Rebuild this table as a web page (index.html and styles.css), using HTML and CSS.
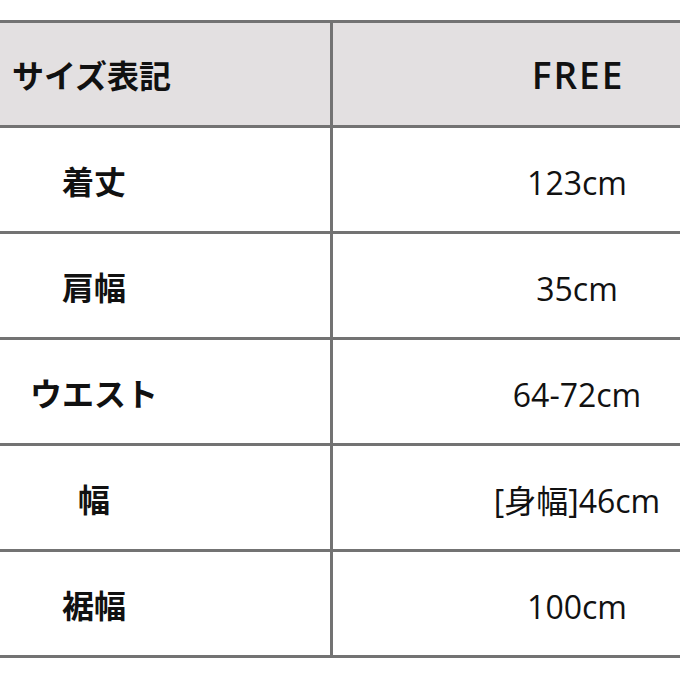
FILE: index.html
```html
<!DOCTYPE html>
<html lang="ja">
<head>
<meta charset="utf-8">
<link rel="stylesheet" href="styles.css">
</head>
<body>
<div class="table">
  <div class="row head">
    <div class="cell label head-label">サイズ表記</div>
    <div class="cell value head-value">FREE</div>
  </div>
  <div class="row">
    <div class="cell label">着丈</div>
    <div class="cell value">123cm</div>
  </div>
  <div class="row">
    <div class="cell label">肩幅</div>
    <div class="cell value">35cm</div>
  </div>
  <div class="row">
    <div class="cell label">ウエスト</div>
    <div class="cell value">64-72cm</div>
  </div>
  <div class="row">
    <div class="cell label">幅</div>
    <div class="cell value">[身幅]46cm</div>
  </div>
  <div class="row">
    <div class="cell label">裾幅</div>
    <div class="cell value">100cm</div>
  </div>
</div>
</body>
</html>
```
FILE: styles.css
```css
html, body {
  margin: 0;
  padding: 0;
  background: #ffffff;
}
body {
  padding-top: 20px;
  font-family: "Noto Sans CJK JP", "Noto Sans", sans-serif;
  color: #111111;
}
.table {
  border-top: 3px solid #737373;
}
.row {
  display: grid;
  grid-template-columns: 330px 1fr;
  height: 103px;
  border-bottom: 3px solid #737373;
}
.row.head {
  background: #e3e0e1;
  height: 102px;
}
.cell {
  display: flex;
  align-items: center;
  font-size: 32px;
  line-height: 1;
}
.label {
  font-weight: 700;
  justify-content: center;
  padding-right: 142px;
}
.head-label {
  justify-content: flex-start;
  padding-right: 0;
  padding-left: 12px;
}
.value {
  border-left: 3px solid #737373;
  justify-content: center;
  padding-left: 141px;
  font-family: "Open Sans", "Noto Sans CJK JP", sans-serif;
  font-weight: 400;
  padding-top: 6px;
}
.head-value {
  font-weight: 600;
  font-size: 37px;
  letter-spacing: 2px;
  padding-top: 0;
  padding-left: 143px;
}
```
